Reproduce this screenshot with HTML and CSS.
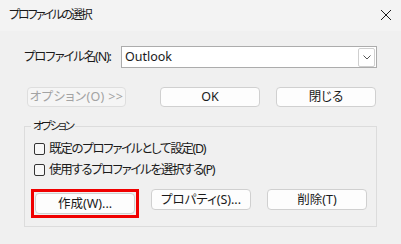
FILE: index.html
```html
<!DOCTYPE html>
<html lang="ja">
<head>
<meta charset="utf-8">
<title>プロファイルの選択</title>
<link rel="stylesheet" href="styles.css">
</head>
<body>
<div class="window">
  <header class="titlebar">
    <span class="title">プロファイルの選択</span>
    <svg class="close" width="12" height="12" viewBox="0 0 12 12"><path d="M1 1 L11 11 M11 1 L1 11" stroke="#1b1b1b" stroke-width="1" fill="none"/></svg>
  </header>
  <main class="content">
    <div class="name-row">
      <label class="name-label">プロファイル名(N):</label>
      <div class="combo">
        <span class="combo-text">Outlook</span>
        <span class="drop"><svg width="8" height="5" viewBox="0 0 8 5"><path d="M0.5 0.5 L4 4 L7.5 0.5" stroke="#555" stroke-width="1" fill="none"/></svg></span>
      </div>
    </div>
    <div class="btn-row">
      <button class="btn wide disabled" disabled>オプション(O) &gt;&gt;</button>
      <button class="btn">OK</button>
      <button class="btn">閉じる</button>
    </div>
    <fieldset class="options">
      <legend class="legend">オプション</legend>
      <div class="check"><span class="box"></span><span class="check-text">既定のプロファイルとして設定(D)</span></div>
      <div class="check"><span class="box"></span><span class="check-text">使用するプロファイルを選択する(P)</span></div>
      <div class="opt-buttons">
        <span class="highlight"><button class="btn">作成(W)...</button></span>
        <button class="btn">プロパティ(S)...</button>
        <button class="btn last">削除(T)</button>
      </div>
    </fieldset>
  </main>
</div>
</body>
</html>
```

FILE: styles.css
```css
* { box-sizing: border-box; }
html, body { margin: 0; padding: 0; }
body {
  width: 401px;
  height: 244px;
  background: #f0f0f0;
  font-family: "Noto Sans", "Noto Sans CJK JP", sans-serif;
  font-feature-settings: "palt";
  font-size: 12px;
  line-height: 16px;
  color: #1a1a1a;
  overflow: hidden;
  white-space: nowrap;
}
.window { width: 401px; height: 244px; display: flex; flex-direction: column; }
.titlebar {
  height: 31px;
  background: #f3f3f3;
  display: flex;
  align-items: center;
  justify-content: space-between;
  padding: 0 9px 2px 9px;
}
.title { font-size: 12px; line-height: 16px; letter-spacing: -2px; }
.content { padding: 15px 24px 0 24px; display: flex; flex-direction: column; }
.name-row { display: flex; align-items: center; height: 22px; }
.name-label { width: 97px; flex-shrink: 0; font-size: 12.5px; letter-spacing: -1.2px; }
.combo {
  width: 256px; height: 22px;
  border: 1px solid #acacac;
  background: #fff;
  display: flex; align-items: center; justify-content: space-between;
  padding: 0 1px 0 3px;
}
.combo-text { font-size: 12.5px; }
.drop {
  width: 17px; height: 19px;
  border: 1px solid #cfcfcf;
  border-radius: 2px;
  display: flex; align-items: center; justify-content: center;
  background: #fff;
}
.btn-row { display: flex; margin-top: 19px; padding-left: 3px; gap: 34px; }
.btn-row .btn + .btn + .btn { margin-left: -18px; }
.btn {
  width: 100px; height: 20px;
  border: 1px solid #d0d0d0;
  border-radius: 4px;
  background: #fdfdfd;
  font-family: inherit;
  font-feature-settings: "palt";
  font-size: 12.5px;
  color: #1a1a1a;
  padding: 0;
  line-height: 18px;
  display: block;
}
.btn.wide { width: 99px; }
.btn.disabled { color: #a3a3a3; background: #f5f5f5; border-color: #dedede; letter-spacing: 0.35px; }
.options {
  margin: 11px 0 0 0;
  width: 353px;
  height: 109px;
  border: 1px solid #dcdcdc;
  padding: 4px 9px 0 9px;
}
.legend { padding: 0 2px; margin-left: -3px; font-size: 11.5px; line-height: 16px; letter-spacing: -2.2px; }
.check { display: flex; align-items: center; height: 21px; gap: 4px; font-size: 12.5px; }
.check-text { letter-spacing: -1.3px; }
.box {
  width: 11px; height: 12px;
  border: 1px solid #333;
  border-radius: 2px;
  background: #f7f7f7;
}
.opt-buttons { display: flex; gap: 12px; margin-top: 9px; margin-left: -3px; }
.opt-buttons .btn { height: 21px; }
.opt-buttons .last { margin-left: 4px; }
.highlight { display: block; border: 3px solid #f00000; padding: 1px; }
```
